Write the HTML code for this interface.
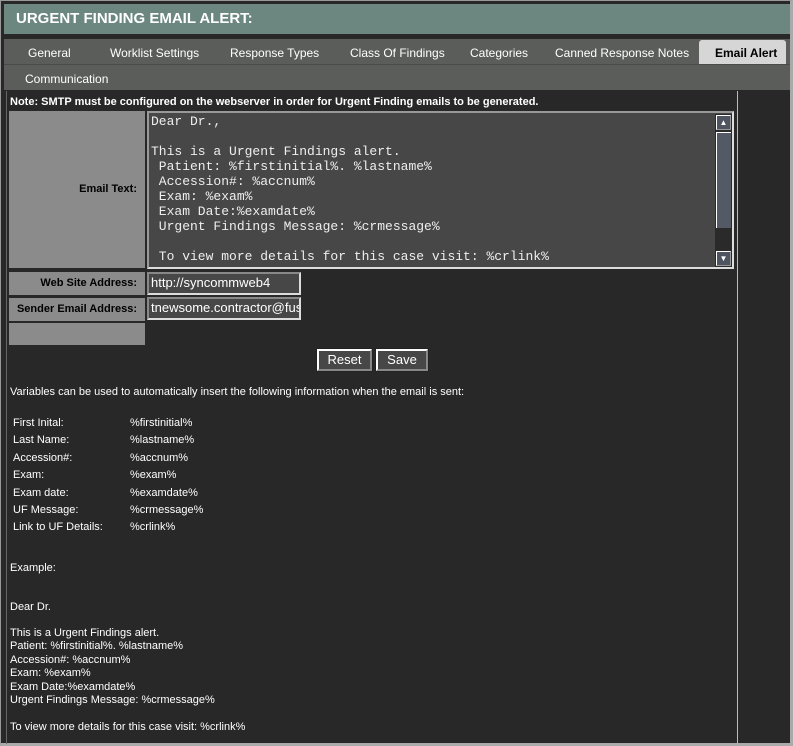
<!DOCTYPE html>
<html><head><meta charset="utf-8"><style>
*{margin:0;padding:0;box-sizing:border-box}
body{width:793px;height:746px;background:#282828;position:relative;overflow:hidden;font-family:"Liberation Sans",sans-serif;color:#fff;font-size:11px}
.a{position:absolute;white-space:nowrap}
.lbl{position:absolute;background:#8b8b8b;color:#000;font-weight:bold;font-size:11px;text-align:right;padding-right:8px}
.inp{position:absolute;background:#474747;border:2px solid #ddd;border-top-color:#888;border-left-color:#888;color:#fff;font-size:13px;padding-left:2px;line-height:17px;overflow:hidden;white-space:nowrap}
.btn{position:absolute;background:#474747;border:2px solid #fff;border-right-color:#888;border-bottom-color:#888;outline:1px solid #222;color:#fff;font-size:13px;text-align:center;line-height:17px}
.tab{position:absolute;top:46px;font-size:12px;color:#fff}
</style></head><body>
<div class="a" style="left:0;top:0;width:793px;height:746px;border:1px solid #999;border-right:3px solid #aaa;border-bottom:3px solid #aaa"></div>
<div class="a" style="left:4px;top:4px;width:786px;height:30px;background:#6b877f"></div>
<div class="a" style="left:16px;top:10px;font-size:15px;font-weight:bold">URGENT FINDING EMAIL ALERT:</div>
<div class="a" style="left:4px;top:39px;width:786px;height:51px;background:#5b5d5a"></div>
<div class="a" style="left:4px;top:64px;width:786px;height:1px;background:#4a4c4a"></div>
<div class="tab" style="left:28px">General</div>
<div class="tab" style="left:110px">Worklist Settings</div>
<div class="tab" style="left:230px">Response Types</div>
<div class="tab" style="left:350px">Class Of Findings</div>
<div class="tab" style="left:470px">Categories</div>
<div class="tab" style="left:555px">Canned Response Notes</div>
<div class="a" style="left:699px;top:40px;width:87px;height:24px;background:#d6d6d6;border-radius:3px 3px 0 0"></div>
<div class="tab" style="left:715px;color:#000;font-weight:bold">Email Alert</div>
<div class="tab" style="left:25px;top:72px">Communication</div>
<div class="a" style="left:6px;top:91px;width:732px;height:653px;border:1px solid #bbb;border-top:none;border-bottom:none;border-left-color:#666"></div>
<div class="a" style="left:10px;top:96px;font-weight:bold">Note: SMTP must be configured on the webserver in order for Urgent Finding emails to be generated.</div>
<div class="lbl" style="left:9px;top:111px;width:136px;height:157px;line-height:157px">Email Text:</div>
<div class="lbl" style="left:9px;top:272px;width:136px;height:23px;line-height:23px">Web Site Address:</div>
<div class="lbl" style="left:9px;top:298px;width:136px;height:23px;line-height:23px;padding-right:8px">Sender Email Address:</div>
<div class="lbl" style="left:9px;top:323px;width:136px;height:22px"></div>
<div class="a" style="left:147px;top:111px;width:587px;height:158px;background:#474747;border:2px solid #ddd;border-top-color:#999;border-left-color:#999"></div>
<div class="a" style="left:151px;top:114px;font-family:'Liberation Mono',monospace;font-size:13px;line-height:15px;color:#eee;white-space:pre">Dear Dr.,

This is a Urgent Findings alert.
 Patient: %firstinitial%. %lastname%
 Accession#: %accnum%
 Exam: %exam%
 Exam Date:%examdate%
 Urgent Findings Message: %crmessage%

 To view more details for this case visit: %crlink%</div>
<div class="a" style="left:715px;top:114px;width:17px;height:153px;background:#2a2a2a"></div>
<div class="a" style="left:716px;top:115px;width:15px;height:15px;background:#4e5560;border:1px solid #fff;border-right-color:#999;border-bottom-color:#999;color:#fff;font-size:8px;text-align:center;line-height:13px">▲</div>
<div class="a" style="left:716px;top:132px;width:15px;height:96px;background:#535a65;border-top:1px solid #fff;border-left:1px solid #fff"></div>
<div class="a" style="left:716px;top:251px;width:15px;height:15px;background:#4e5560;border:1px solid #fff;border-right-color:#999;border-bottom-color:#999;color:#fff;font-size:8px;text-align:center;line-height:13px">▼</div>
<div class="inp" style="left:147px;top:272px;width:154px;height:23px">http://syncommweb4</div>
<div class="inp" style="left:147px;top:297px;width:154px;height:23px">tnewsome.contractor@fusion</div>
<div class="btn" style="left:317px;top:349px;width:55px;height:22px">Reset</div>
<div class="btn" style="left:376px;top:349px;width:52px;height:22px">Save</div>
<div class="a" style="left:10px;top:386px">Variables can be used to automatically insert the following information when the email is sent:</div>
<div class="a" style="left:13px;top:415px;line-height:17.4px">First Inital:<br>Last Name:<br>Accession#:<br>Exam:<br>Exam date:<br>UF Message:<br>Link to UF Details:</div>
<div class="a" style="left:130px;top:415px;line-height:17.4px">%firstinitial%<br>%lastname%<br>%accnum%<br>%exam%<br>%examdate%<br>%crmessage%<br>%crlink%</div>
<div class="a" style="left:10px;top:562px">Example:</div>
<div class="a" style="left:10px;top:601px">Dear Dr.</div>
<div class="a" style="left:10px;top:627px;line-height:13.4px">This is a Urgent Findings alert.<br>Patient: %firstinitial%. %lastname%<br>Accession#: %accnum%<br>Exam: %exam%<br>Exam Date:%examdate%<br>Urgent Findings Message: %crmessage%<br><br>To view more details for this case visit: %crlink%</div>
</body></html>
